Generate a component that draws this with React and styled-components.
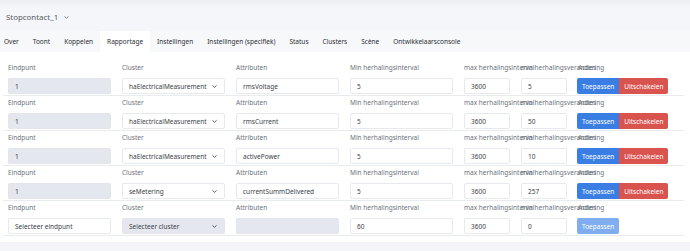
import styled, { createGlobalStyle } from "styled-components";

const Global = createGlobalStyle`
  html, body {
    margin: 0;
    padding: 0;
    background: #f4f5f8;
    font-family: "Noto Sans", "Open Sans", sans-serif;
  }
  * { box-sizing: border-box; }
`;

const Page = styled.div`
  width: 690px;
  height: 251px;
  overflow: hidden;
  background: #f4f5f8;
`;

const Header = styled.div`
  height: 31px;
  display: flex;
  align-items: center;
  gap: 5px;
  padding: 3px 0 0 6px;
  font-size: 7.9px;
  color: #555b63;
  background: linear-gradient(#eceef2, #f5f6f9 8px);
`;

const Tabs = styled.div`
  display: flex;
  height: 21px;
  margin-left: -3px;
  background: #f7f8fa;
`;

const Tab = styled.div`
  display: flex;
  align-items: center;
  padding: 0 7px;
  font-size: 6.5px;
  color: #2a2f35;
  background: ${(p) => (p.$active ? "#ffffff" : "transparent")};
`;

const Card = styled.div`
  background: #ffffff;
  padding: 9px 6px 6px 3px;
`;

const Row = styled.div`
  display: grid;
  grid-template-columns: 103px 103px 103px 103px 46px 46px auto;
  column-gap: 11px;
  padding: 1px 0 1px 5px;
  border-bottom: 1px solid #e9ecef;
`;

const Field = styled.div`
  display: flex;
  flex-direction: column;
  align-items: flex-start;
  min-width: 0;
`;

const Label = styled.div`
  height: 12px;
  line-height: 12px;
  margin-bottom: 4px;
  font-size: 6.5px;
  color: #6b737c;
  white-space: nowrap;
  overflow: visible;
`;

const Box = styled.div`
  width: 100%;
  height: 16px;
  display: flex;
  align-items: center;
  justify-content: space-between;
  padding: 0 6px;
  font-size: 6.5px;
  color: #3c4248;
  border: 1px solid ${(p) => (p.$disabled ? "#e2e6ec" : "#e6e9ee")};
  border-radius: 2px;
  background: ${(p) => (p.$disabled ? "#e4e8ee" : "#ffffff")};
  white-space: nowrap;
`;

const Actions = styled.div`
  display: flex;
  height: 16px;
  margin-left: -1px;
`;

const Button = styled.div`
  display: flex;
  align-items: center;
  padding: 0 5px;
  font-size: 6.5px;
  color: #ffffff;
  background: ${(p) => p.$bg};
  border-radius: ${(p) => p.$radius};
`;

const Chevron = ({ size = 7, color = "#555" }) => (
  <svg width={size} height={size} viewBox="0 0 10 10" fill="none">
    <path d="M2.5 3.8 L5 6.2 L7.5 3.8" stroke={color} strokeWidth="1.4" strokeLinecap="round" strokeLinejoin="round" />
  </svg>
);

const tabs = [
  "Over",
  "Toont",
  "Koppelen",
  "Rapportage",
  "Instellingen",
  "Instellingen (specifiek)",
  "Status",
  "Clusters",
  "Scène",
  "Ontwikkelaarsconsole",
];

const rows = [
  { ep: "1", cluster: "haElectricalMeasurement", attr: "rmsVoltage", min: "5", max: "3600", change: "5" },
  { ep: "1", cluster: "haElectricalMeasurement", attr: "rmsCurrent", min: "5", max: "3600", change: "50" },
  { ep: "1", cluster: "haElectricalMeasurement", attr: "activePower", min: "5", max: "3600", change: "10" },
  { ep: "1", cluster: "seMetering", attr: "currentSummDelivered", min: "5", max: "3600", change: "257" },
];

const ReportRow = ({ ep, cluster, attr, min, max, change, isNew }) => (
  <Row>
    <Field>
      <Label>Eindpunt</Label>
      <Box $disabled={!isNew}>{ep}</Box>
    </Field>
    <Field>
      <Label>Cluster</Label>
      <Box $disabled={isNew}>
        {cluster}
        <Chevron />
      </Box>
    </Field>
    <Field>
      <Label>Attributen</Label>
      <Box $disabled={isNew}>{attr}</Box>
    </Field>
    <Field>
      <Label>Min herhalingsinterval</Label>
      <Box>{min}</Box>
    </Field>
    <Field>
      <Label>max herhalingsinterval</Label>
      <Box>{max}</Box>
    </Field>
    <Field>
      <Label>min herhalingsverandering</Label>
      <Box>{change}</Box>
    </Field>
    <Field>
      <Label>Acties</Label>
      <Actions>
        {isNew ? (
          <Button $bg="#7fadf0" $radius="2px">Toepassen</Button>
        ) : (
          <>
            <Button $bg="#3a7ee4" $radius="2px 0 0 2px">Toepassen</Button>
            <Button $bg="#d9534f" $radius="0 2px 2px 0">Uitschakelen</Button>
          </>
        )}
      </Actions>
    </Field>
  </Row>
);

export default function App() {
  return (
    <Page>
      <Global />
      <Header>
        Stopcontact_1
        <Chevron size={7} color="#777" />
      </Header>
      <Tabs>
        {tabs.map((t) => (
          <Tab key={t} $active={t === "Rapportage"}>
            {t}
          </Tab>
        ))}
      </Tabs>
      <Card>
        {rows.map((r, i) => (
          <ReportRow key={i} {...r} />
        ))}
        <ReportRow
          isNew
          ep="Selecteer eindpunt"
          cluster="Selecteer cluster"
          attr=""
          min="60"
          max="3600"
          change="0"
        />
      </Card>
    </Page>
  );
}
